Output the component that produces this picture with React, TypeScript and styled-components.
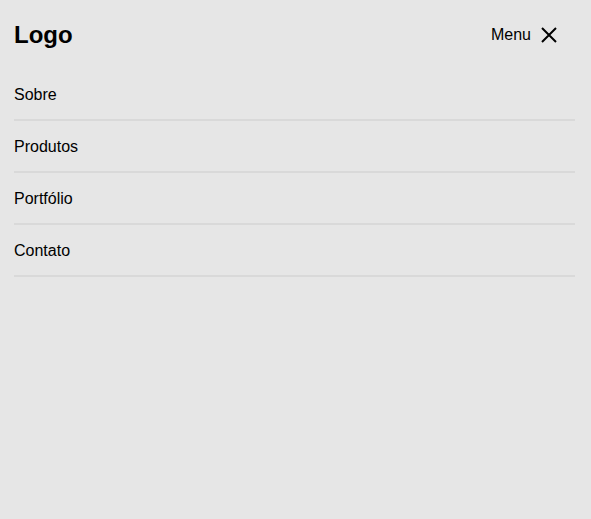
import React from "react";
import styled, { createGlobalStyle } from "styled-components";

const Global = createGlobalStyle`
  html, body {
    margin: 0;
    padding: 0;
    background: #e6e6e6;
    font-family: "Liberation Sans", Arial, sans-serif;
    color: #000;
  }
`;

const Page = styled.div`
  padding: 0 16px 0 14px;
  min-height: 519px;
  box-sizing: border-box;
`;

const Header = styled.header`
  display: flex;
  align-items: center;
  justify-content: space-between;
  height: 69px;
  padding-right: 18px;
`;

const Logo = styled.div`
  font-size: 24px;
  font-weight: 700;
  line-height: 28px;
  margin-top: 1px;
`;

const Toggle = styled.button`
  display: flex;
  align-items: center;
  gap: 10px;
  background: none;
  border: none;
  padding: 0;
  font-family: inherit;
  font-size: 16px;
  line-height: 18px;
  color: #000;
  cursor: pointer;
`;

const ToggleLabel = styled.span`
  margin-top: 1px;
`;

const Nav = styled.nav`
  display: flex;
  flex-direction: column;
`;

const NavItem = styled.a`
  display: block;
  padding: 17px 0 15px;
  font-size: 16px;
  line-height: 18px;
  color: #000;
  text-decoration: none;
  border-bottom: 2px solid #d9d9d9;
`;

const items = ["Sobre", "Produtos", "Portfólio", "Contato"];

export default function App() {
  return (
    <>
      <Global />
      <Page>
        <Header>
          <Logo>Logo</Logo>
          <Toggle>
            <ToggleLabel>Menu</ToggleLabel>
            <svg width="16" height="16" viewBox="0 0 16 16" fill="none">
              <path d="M1 1L15 15M15 1L1 15" stroke="#000" strokeWidth="2" />
            </svg>
          </Toggle>
        </Header>
        <Nav>
          {items.map((i) => (
            <NavItem key={i} href="#">
              {i}
            </NavItem>
          ))}
        </Nav>
      </Page>
    </>
  );
}
